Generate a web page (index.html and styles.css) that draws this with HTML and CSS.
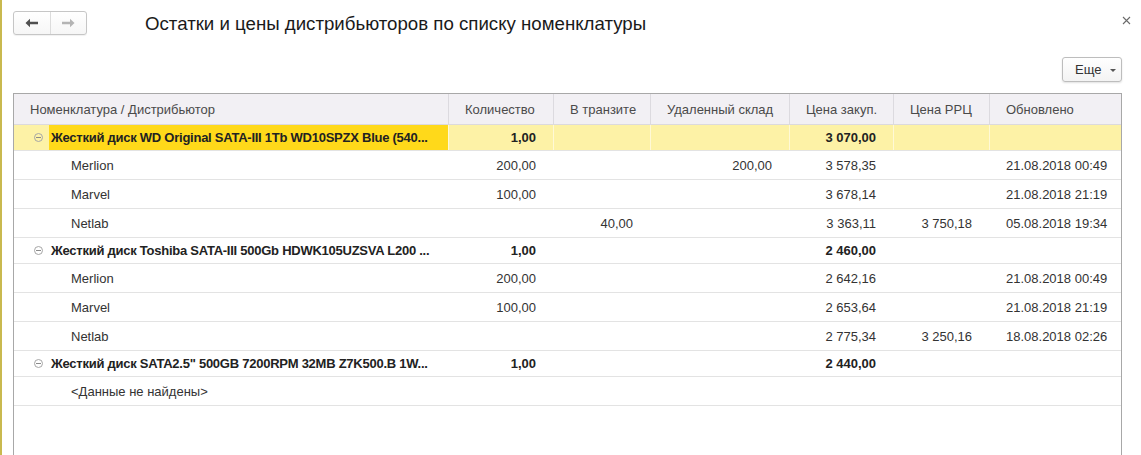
FILE: index.html
```html
<!DOCTYPE html>
<html lang="ru">
<head>
<meta charset="utf-8">
<title>Остатки и цены дистрибьюторов</title>
<link rel="stylesheet" href="styles.css">
</head>
<body>
<div class="page">
  <header class="titlebar">
    <div class="nav">
      <button class="nav-btn back" type="button" aria-label="Назад">
        <svg width="14" height="10" viewBox="0 0 14 10"><path d="M0.5 5 L5 0.8 L5 3.8 L13 3.8 L13 6.2 L5 6.2 L5 9.2 Z" fill="#505050"/></svg>
      </button>
      <button class="nav-btn fwd" type="button" aria-label="Вперёд">
        <svg width="14" height="10" viewBox="0 0 14 10"><path d="M13.5 5 L9 0.8 L9 3.8 L1 3.8 L1 6.2 L9 6.2 L9 9.2 Z" fill="#b4b4b4"/></svg>
      </button>
    </div>
    <h1 class="title">Остатки и цены дистрибьюторов по списку номенклатуры</h1>
    <button class="close" type="button" aria-label="Закрыть">
      <svg width="9" height="9" viewBox="0 0 9 9"><path d="M1 1 L8 8 M8 1 L1 8" stroke="#6a6a6a" stroke-width="1.1"/></svg>
    </button>
  </header>

  <div class="toolbar">
    <button class="more" type="button">Еще <span class="caret"></span></button>
  </div>

  <div class="grid">
    <div class="row head">
      <div class="cell">Номенклатура / Дистрибьютор</div>
      <div class="cell">Количество</div>
      <div class="cell">В транзите</div>
      <div class="cell">Удаленный склад</div>
      <div class="cell">Цена закуп.</div>
      <div class="cell">Цена РРЦ</div>
      <div class="cell">Обновлено</div>
    </div>

    <div class="row group current">
      <div class="cell name"><span class="toggle"></span><span class="label">Жесткий диск WD Original SATA-III 1Tb WD10SPZX Blue (540...</span></div>
      <div class="cell num">1,00</div>
      <div class="cell num"></div>
      <div class="cell num"></div>
      <div class="cell num">3 070,00</div>
      <div class="cell num"></div>
      <div class="cell"></div>
    </div>
    <div class="row child">
      <div class="cell name">Merlion</div>
      <div class="cell num">200,00</div>
      <div class="cell num"></div>
      <div class="cell num">200,00</div>
      <div class="cell num">3 578,35</div>
      <div class="cell num"></div>
      <div class="cell">21.08.2018 00:49</div>
    </div>
    <div class="row child">
      <div class="cell name">Marvel</div>
      <div class="cell num">100,00</div>
      <div class="cell num"></div>
      <div class="cell num"></div>
      <div class="cell num">3 678,14</div>
      <div class="cell num"></div>
      <div class="cell">21.08.2018 21:19</div>
    </div>
    <div class="row child">
      <div class="cell name">Netlab</div>
      <div class="cell num"></div>
      <div class="cell num">40,00</div>
      <div class="cell num"></div>
      <div class="cell num">3 363,11</div>
      <div class="cell num">3 750,18</div>
      <div class="cell">05.08.2018 19:34</div>
    </div>

    <div class="row group">
      <div class="cell name"><span class="toggle"></span><span class="label">Жесткий диск Toshiba SATA-III 500Gb HDWK105UZSVA L200 ...</span></div>
      <div class="cell num">1,00</div>
      <div class="cell num"></div>
      <div class="cell num"></div>
      <div class="cell num">2 460,00</div>
      <div class="cell num"></div>
      <div class="cell"></div>
    </div>
    <div class="row child">
      <div class="cell name">Merlion</div>
      <div class="cell num">200,00</div>
      <div class="cell num"></div>
      <div class="cell num"></div>
      <div class="cell num">2 642,16</div>
      <div class="cell num"></div>
      <div class="cell">21.08.2018 00:49</div>
    </div>
    <div class="row child">
      <div class="cell name">Marvel</div>
      <div class="cell num">100,00</div>
      <div class="cell num"></div>
      <div class="cell num"></div>
      <div class="cell num">2 653,64</div>
      <div class="cell num"></div>
      <div class="cell">21.08.2018 21:19</div>
    </div>
    <div class="row child">
      <div class="cell name">Netlab</div>
      <div class="cell num"></div>
      <div class="cell num"></div>
      <div class="cell num"></div>
      <div class="cell num">2 775,34</div>
      <div class="cell num">3 250,16</div>
      <div class="cell">18.08.2018 02:26</div>
    </div>

    <div class="row group">
      <div class="cell name"><span class="toggle"></span><span class="label">Жесткий диск SATA2.5" 500GB 7200RPM 32MB Z7K500.B 1W...</span></div>
      <div class="cell num">1,00</div>
      <div class="cell num"></div>
      <div class="cell num"></div>
      <div class="cell num">2 440,00</div>
      <div class="cell num"></div>
      <div class="cell"></div>
    </div>
    <div class="row child">
      <div class="cell name">&lt;Данные не найдены&gt;</div>
      <div class="cell num"></div>
      <div class="cell num"></div>
      <div class="cell num"></div>
      <div class="cell num"></div>
      <div class="cell num"></div>
      <div class="cell"></div>
    </div>
  </div>
</div>
</body>
</html>
```

FILE: styles.css
```css
* { box-sizing: border-box; }

html, body {
  margin: 0;
  padding: 0;
  background: #ffffff;
  height: 100%;
  overflow: hidden;
}

body {
  font-family: "Liberation Sans", Arial, sans-serif;
  font-size: 13px;
  color: #333333;
}

.page {
  border-left: 2px solid #c9b94f;
  min-height: 100vh;
  display: flex;
  flex-direction: column;
}

/* ---------- title bar ---------- */
.titlebar {
  display: flex;
  align-items: center;
  height: 35px;
  padding: 11px 0 0 11px;
}

.nav {
  display: flex;
  width: 74px;
  height: 24px;
  border: 1px solid #c6c6c6;
  border-radius: 3px;
  background: linear-gradient(#ffffff, #f6f6f6);
  box-shadow: 0 1px 1px rgba(0,0,0,0.06);
}

.nav-btn {
  flex: 1;
  border: 0;
  background: transparent;
  padding: 0;
  display: flex;
  align-items: center;
  justify-content: center;
}

.nav-btn.back { border-right: 1px solid #dcdcdc; }

.title {
  margin: 0 0 0 58px;
  font-weight: normal;
  font-size: 18.67px;
  color: #1a1a1a;
  white-space: nowrap;
  position: relative;
  top: 1px;
}

.close {
  margin-left: auto;
  margin-right: 10px;
  align-self: flex-start;
  margin-top: 5px;
  border: 0;
  background: transparent;
  padding: 0;
  width: 9px;
  height: 9px;
  display: flex;
}

/* ---------- toolbar ---------- */
.toolbar {
  display: flex;
  justify-content: flex-end;
  padding-right: 19px;
  margin-top: 22px;
  margin-bottom: 11px;
}

.more {
  width: 60px;
  height: 25px;
  border: 1px solid #bdbdbd;
  border-radius: 3px;
  background: linear-gradient(#ffffff, #f3f3f3);
  box-shadow: 0 1px 2px rgba(0,0,0,0.12);
  font-family: "Liberation Sans", Arial, sans-serif;
  font-size: 13px;
  color: #333333;
  display: flex;
  align-items: center;
  padding: 0 0 0 12px;
}

.caret {
  margin-left: 9px;
  width: 0;
  height: 0;
  border-left: 3px solid transparent;
  border-right: 3px solid transparent;
  border-top: 3px solid #555555;
  margin-top: 1px;
}

/* ---------- grid ---------- */
.grid {
  margin-left: 11px;
  width: 1109px;
  flex: 1;
  border: 1px solid #a8a8a8;
  border-bottom: 0;
}

.row {
  display: grid;
  grid-template-columns: 434px 105px 97px 139px 104px 96px 132px;
  border-bottom: 1px solid #e3e3e3;
}

.cell {
  display: flex;
  align-items: center;
  white-space: nowrap;
  overflow: hidden;
  padding: 0 10px 0 16px;
  border-left: 1px solid transparent;
}

.cell:first-child { border-left: 0; }

.cell.num {
  justify-content: flex-end;
  padding: 0 17px 0 8px;
}

.head {
  height: 31px;
  background: #f2f0f4;
  color: #4a4a4a;
  border-bottom-color: #dcdadd;
}

.head .cell { border-left-color: #dcdadf; }

.group {
  height: 26px;
  font-weight: bold;
  color: #222222;
}

.child { height: 29px; }

.group .cell.name {
  padding-left: 20px;
  padding-right: 0;
  align-items: stretch;
}

.child .cell.name { padding-left: 57px; }

.toggle {
  width: 9px;
  height: 9px;
  border: 1px solid #a6a6a6;
  border-radius: 50%;
  align-self: center;
  margin-right: 6px;
  position: relative;
  flex: none;
}

.toggle::after {
  content: "";
  position: absolute;
  left: 1px;
  right: 1px;
  top: 3px;
  height: 1px;
  background: #8a8a8a;
}

.label {
  flex: 1;
  display: flex;
  align-items: center;
  padding-left: 2px;
  overflow: hidden;
  letter-spacing: -0.25px;
}

.current { background: #fdf2a6; }
.current .cell { border-left-color: #fff9d6; }
.current .label { background: #ffd91a; }
```
